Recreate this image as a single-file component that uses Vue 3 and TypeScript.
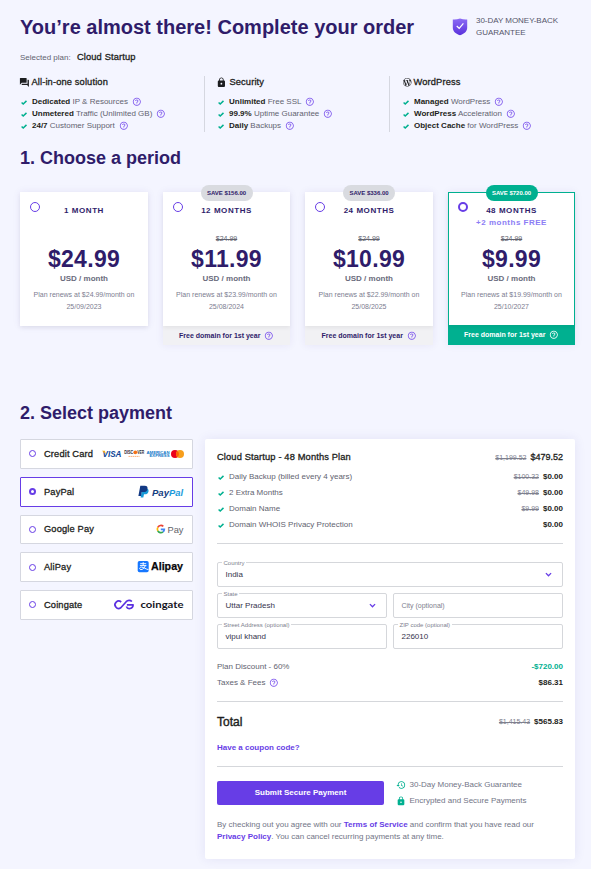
<script setup lang="ts">
import { ref, h, type FunctionalComponent } from 'vue'

interface Feature { strong: string; rest: string }
interface Column { icon: 'forum' | 'lock' | 'wordpress'; title: string; items: Feature[] }
interface Period { id: number; label: string; bonus?: string; save?: string; old?: string; price: string; renew: string; date: string }

const paths: Record<string, string> = {
  help: 'M11 18h2v-2h-2v2zm1-16C6.48 2 2 6.48 2 12s4.48 10 10 10 10-4.48 10-10S17.52 2 12 2zm0 18c-4.41 0-8-3.59-8-8s3.59-8 8-8 8 3.59 8 8-3.59 8-8 8zm0-14c-2.21 0-4 1.79-4 4h2c0-1.1.9-2 2-2s2 .9 2 2c0 2-3 1.75-3 5h2c0-2.25 3-2.5 3-5 0-2.21-1.79-4-4-4z',
  forum: 'M21 6h-2v9H6v2c0 .55.45 1 1 1h11l4 4V7c0-.55-.45-1-1-1zm-4 6V3c0-.55-.45-1-1-1H3c-.55 0-1 .45-1 1v14l4-4h10c.55 0 1-.45 1-1z',
  lock: 'M18 8h-1V6c0-2.76-2.24-5-5-5S7 3.24 7 6v2H6c-1.1 0-2 .9-2 2v10c0 1.1.9 2 2 2h12c1.1 0 2-.9 2-2V10c0-1.1-.9-2-2-2zm-6 9c-1.1 0-2-.9-2-2s.9-2 2-2 2 .9 2 2-.9 2-2 2zm3.1-9H8.9V6c0-1.71 1.39-3.1 3.1-3.1 1.71 0 3.1 1.39 3.1 3.1v2z',
  history: 'M13 3c-4.97 0-9 4.03-9 9H1l3.89 3.89.07.14L9 12H6c0-3.87 3.13-7 7-7s7 3.13 7 7-3.13 7-7 7c-1.93 0-3.68-.79-4.94-2.06l-1.42 1.42C8.27 19.99 10.51 21 13 21c4.97 0 9-4.03 9-9s-4.03-9-9-9zm-1 5v5l4.28 2.54.72-1.21-3.5-2.08V8H12z',
  wordpress: 'M21.469 6.825c.84 1.537 1.318 3.3 1.318 5.175 0 3.979-2.156 7.456-5.363 9.325l3.295-9.527c.615-1.54.82-2.771.82-3.864 0-.405-.026-.78-.07-1.11m-7.981.105c.647-.03 1.232-.105 1.232-.105.582-.075.514-.93-.067-.899 0 0-1.755.135-2.88.135-1.064 0-2.85-.15-2.85-.15-.585-.03-.661.855-.075.885 0 0 .54.061 1.125.09l1.68 4.605-2.37 7.08L5.354 6.9c.649-.03 1.234-.1 1.234-.1.585-.075.516-.93-.065-.896 0 0-1.746.138-2.874.138-.2 0-.438-.008-.69-.015C4.911 3.15 8.235 1.215 12 1.215c2.809 0 5.365 1.072 7.286 2.833-.046-.003-.091-.009-.141-.009-1.06 0-1.812.923-1.812 1.914 0 .89.513 1.643 1.06 2.531.411.72.89 1.643.89 2.977 0 .915-.354 1.994-.821 3.479l-1.075 3.585-3.9-11.61.001.014zM12 22.784c-1.059 0-2.081-.153-3.048-.437l3.237-9.406 3.315 9.087c.024.053.05.101.078.149-1.12.393-2.325.609-3.582.609M1.211 12c0-1.564.336-3.05.935-4.39L7.29 21.709C3.694 19.96 1.212 16.271 1.211 12M12 0C5.385 0 0 5.385 0 12s5.385 12 12 12 12-5.385 12-12S18.615 0 12 0',
}

const Icon: FunctionalComponent<{ name: string }> = (props) =>
  h('svg', { viewBox: '0 0 24 24', 'aria-hidden': 'true' }, [h('path', { d: paths[props.name], fill: 'currentColor' })])
Icon.props = ['name']

const Check: FunctionalComponent = () =>
  h('svg', { viewBox: '0 0 6 5', 'aria-hidden': 'true' }, [
    h('path', { d: 'M.6 2.5 2.2 4 5.5.9', fill: 'none', stroke: '#00b090', 'stroke-width': '1.5' }),
  ])

const columns: Column[] = [
  { icon: 'forum', title: 'All-in-one solution', items: [
    { strong: 'Dedicated', rest: 'IP & Resources' },
    { strong: 'Unmetered', rest: 'Traffic (Unlimited GB)' },
    { strong: '24/7', rest: 'Customer Support' },
  ] },
  { icon: 'lock', title: 'Security', items: [
    { strong: 'Unlimited', rest: 'Free SSL' },
    { strong: '99.9%', rest: 'Uptime Guarantee' },
    { strong: 'Daily', rest: 'Backups' },
  ] },
  { icon: 'wordpress', title: 'WordPress', items: [
    { strong: 'Managed', rest: 'WordPress' },
    { strong: 'WordPress', rest: 'Acceleration' },
    { strong: 'Object Cache', rest: 'for WordPress' },
  ] },
]

const periods: Period[] = [
  { id: 1, label: '1 MONTH', price: '$24.99', renew: '$24.99', date: '25/09/2023' },
  { id: 12, label: '12 MONTHS', save: 'SAVE $156.00', old: '$24.99', price: '$11.99', renew: '$23.99', date: '25/08/2024' },
  { id: 24, label: '24 MONTHS', save: 'SAVE $336.00', old: '$24.99', price: '$10.99', renew: '$22.99', date: '25/08/2025' },
  { id: 48, label: '48 MONTHS', bonus: '+2 months FREE', save: 'SAVE $720.00', old: '$24.99', price: '$9.99', renew: '$19.99', date: '25/10/2027' },
]

const methods = ['Credit Card', 'PayPal', 'Google Pay', 'AliPay', 'Coingate']

const lines = [
  { name: 'Daily Backup (billed every 4 years)', old: '$100.32' },
  { name: '2 Extra Months', old: '$49.98' },
  { name: 'Domain Name', old: '$9.99' },
  { name: 'Domain WHOIS Privacy Protection', old: '' },
]

const period = ref(48)
const method = ref('PayPal')
</script>

<template>
  <main class="page">
    <header class="head">
      <h1>You’re almost there! Complete your order</h1>
      <div class="guarantee">
        <svg class="shield" viewBox="0 0 16 18">
          <defs>
            <linearGradient id="shieldFill" x1="0" y1="0" x2="0" y2="1">
              <stop offset="0" stop-color="#8c6cf5" />
              <stop offset="1" stop-color="#5a31dc" />
            </linearGradient>
          </defs>
          <path d="M8 .5C5.500 1.400 3.200 1.500.8 1.400v8C.8 13.400 4 15.900 8 17.200c4-1.300 7.200-3.800 7.200-7.800v-8C12.800 1.500 10.500 1.400 8 .5z" fill="url(#shieldFill)" />
          <path d="M4.700 8 7.200 10.300 11.400 5.300" fill="none" stroke="#fff" stroke-width="1.200" />
        </svg>
        <p>30-DAY MONEY-BACK<br />GUARANTEE</p>
      </div>
    </header>

    <p class="selected">Selected plan: <b class="medium">Cloud Startup</b></p>

    <section class="columns">
      <div v-for="col in columns" :key="col.title" class="column">
        <h3 class="medium"><Icon :name="col.icon" :class="['head-icon', col.icon]" />{{ col.title }}</h3>
        <ul>
          <li v-for="f in col.items" :key="f.strong">
            <Check class="check" /><span><b>{{ f.strong }}</b> {{ f.rest }}</span><Icon name="help" class="help" />
          </li>
        </ul>
      </div>
    </section>

    <h2 class="period-title">1. Choose a period</h2>

    <section class="periods">
      <article v-for="p in periods" :key="p.id" class="period" :class="{ active: period === p.id }" @click="period = p.id">
        <div class="body">
          <span v-if="p.save" class="save">{{ p.save }}</span>
          <span class="radio big" :class="{ on: period === p.id }"></span>
          <div class="label">{{ p.label }}</div>
          <div class="bonus">{{ p.bonus }}</div>
          <div class="old">{{ p.old }}</div>
          <div class="price">{{ p.price }}</div>
          <div class="unit">USD / month</div>
          <div class="renew">Plan renews at {{ p.renew }}/month on<br />{{ p.date }}</div>
        </div>
        <div v-if="p.save" class="foot">Free domain for 1st year<Icon name="help" class="help" /></div>
      </article>
    </section>

    <h2 class="payment-title">2. Select payment</h2>

    <section class="payment">
      <div class="methods">
        <button v-for="m in methods" :key="m" type="button" class="method" :class="{ active: method === m }" @click="method = m">
          <span class="radio" :class="{ on: method === m }"></span>
          <span class="name medium">{{ m }}</span>

          <svg v-if="m === 'Credit Card'" class="logo" width="82" height="12" viewBox="0 0 82 12">
            <text x="0.500" y="9" font-size="8.500" font-weight="700" font-style="italic" fill="#0e4595" textLength="19" lengthAdjust="spacingAndGlyphs">VISA</text>
            <path d="M0 2.700h2.800l1.100 3.200z" fill="#f2ae14" />
            <text x="22.300" y="6" font-size="4.600" font-weight="700" fill="#2b2b33" textLength="9" lengthAdjust="spacingAndGlyphs">DISC</text>
            <circle cx="33.300" cy="4.300" r="1.900" fill="#f47216" />
            <text x="35.200" y="6" font-size="4.600" font-weight="700" fill="#2b2b33" textLength="7" lengthAdjust="spacingAndGlyphs">VER</text>
            <path d="M26.500 8.400h11" stroke="#f9b27c" stroke-width="1" stroke-dasharray="1.500 .5" />
            <text x="44.500" y="5.500" font-size="4.200" font-weight="700" fill="#0f78c8" textLength="23" lengthAdjust="spacingAndGlyphs">AMERICAN</text>
            <text x="47.500" y="9.300" font-size="4.200" font-weight="700" fill="#0f78c8" textLength="20" lengthAdjust="spacingAndGlyphs">EXPRESS</text>
            <circle cx="73" cy="6" r="4" fill="#eb001b" />
            <circle cx="78" cy="6" r="4" fill="#f79e1b" />
            <path d="M75.500 2.900a4 4 0 0 1 0 6.200 4 4 0 0 1 0-6.200z" fill="#ff5f00" />
          </svg>

          <svg v-else-if="m === 'PayPal'" class="logo" width="46" height="14" viewBox="0 0 46 14">
            <path d="M4.300 3.500h4.400c1.600.4 2.100 1.500 1.800 3-.4 2-1.800 2.800-3.700 2.800H6L5.300 12.600H2.600z" fill="#179bd7" />
            <path d="M2.300.8h4.400C8.900.8 9.800 2 9.500 3.900 9.100 6.100 7.600 7.100 5.500 7.100H3.700l-.7 4H.4z" fill="#123984" />
            <text x="14" y="10.500" font-size="9.500" font-weight="700" font-style="italic" fill="#143d80" textLength="17" lengthAdjust="spacingAndGlyphs">Pay</text>
            <text x="31" y="10.500" font-size="9.500" font-weight="700" font-style="italic" fill="#1a9adb" textLength="14" lengthAdjust="spacingAndGlyphs">Pal</text>
          </svg>

          <svg v-else-if="m === 'Google Pay'" class="logo" width="28" height="13" viewBox="0 0 28 13">
            <path d="M7.300 3.400A3.500 3.500 0 0 0 1.800 4.400" fill="none" stroke="#ea4335" stroke-width="1.700" />
            <path d="M1.800 4.400a3.500 3.500 0 0 0 0 3.400" fill="none" stroke="#fbbc04" stroke-width="1.700" />
            <path d="M1.800 7.800a3.500 3.500 0 0 0 5.200 1.100" fill="none" stroke="#34a853" stroke-width="1.700" />
            <path d="M7 8.900a3.500 3.500 0 0 0 1.300-2.500H4.800" fill="none" stroke="#4285f4" stroke-width="1.700" />
            <text x="11.500" y="9.500" font-size="9.800" font-weight="400" fill="#5f6368" textLength="16" lengthAdjust="spacingAndGlyphs">Pay</text>
          </svg>

          <svg v-else-if="m === 'AliPay'" class="logo" width="47" height="14" viewBox="0 0 47 14">
            <rect x="0.700" y="1" width="11" height="11.300" rx="1.700" fill="#1677ff" />
            <path d="M3.200 3.700h6M6.200 2.200v3.500M2.900 5.600h6.500M8.200 5.700C7.600 8 5.700 9.700 3.900 9.600 1.900 9.400 2.500 7 4.600 7.100 6.700 7.300 8.500 9 11.500 9.700" fill="none" stroke="#fff" stroke-width=".95" />
            <text x="14" y="10" font-size="11" font-weight="700" fill="#08080c" stroke="#08080c" stroke-width=".25" textLength="32" lengthAdjust="spacingAndGlyphs">Alipay</text>
          </svg>

          <svg v-else class="logo" width="71" height="13" viewBox="0 0 71 13">
            <path d="M8.200 4A3.700 3.700 0 1 0 7.800 9.800L13.200 3.700c1.500-1.600 4-1.800 5.700-.2M13.900 6.800h6.200c0 4.200-5.500 5-6.700 1.700" fill="none" stroke="#5a2fe0" stroke-width="1.700" stroke-linejoin="round" />
            <text class="coin" x="27.500" y="9.500" font-size="9.500" font-weight="700" fill="#15151d" textLength="43" lengthAdjust="spacingAndGlyphs">coingate</text>
          </svg>
        </button>
      </div>

      <div class="panel">
        <div class="row plan"><b class="medium">Cloud Startup - 48 Months Plan</b><span><s>$1,199.52</s><b class="medium amount">$479.52</b></span></div>
        <div v-for="l in lines" :key="l.name" class="row line">
          <span class="item"><Check class="check" />{{ l.name }}</span>
          <span><s v-if="l.old">{{ l.old }}</s><b>$0.00</b></span>
        </div>
        <hr class="first" />

        <div class="fields">
          <label class="field wide"><span class="tag">Country</span><span>India</span>
            <svg class="chevron" viewBox="0 0 8 6"><path d="M1 1.300 4 4.300 7 1.300" /></svg>
          </label>
          <label class="field"><span class="tag">State</span><span>Uttar Pradesh</span>
            <svg class="chevron" viewBox="0 0 8 6"><path d="M1 1.300 4 4.300 7 1.300" /></svg>
          </label>
          <label class="field"><span class="placeholder">City (optional)</span></label>
          <label class="field"><span class="tag">Street Address (optional)</span><span>vipul khand</span></label>
          <label class="field"><span class="tag">ZIP code (optional)</span><span>226010</span></label>
        </div>

        <div class="row sum"><span>Plan Discount - 60%</span><b class="green">-$720.00</b></div>
        <div class="row sum"><span class="item">Taxes &amp; Fees<Icon name="help" class="help" /></span><b>$86.31</b></div>
        <hr class="second" />
        <div class="row total"><b class="word">Total</b><span><s>$1,415.43</s><b>$565.83</b></span></div>
        <a class="coupon">Have a coupon code?</a>
        <hr class="third" />

        <div class="submit">
          <button type="button">Submit Secure Payment</button>
          <ul>
            <li><Icon name="history" />30-Day Money-Back Guarantee</li>
            <li><Icon name="lock" />Encrypted and Secure Payments</li>
          </ul>
        </div>
        <p class="terms">By checking out you agree with our <b>Terms of Service</b> and confirm that you have read our <b>Privacy Policy</b>. You can cancel recurring payments at any time.</p>
      </div>
    </section>
  </main>
</template>

<style>
body { background: #f4f5ff; }
</style>

<style scoped>
.page {
  box-sizing: border-box;
  width: 591px;
  height: 869px;
  padding: 0 16px 0 20px;
  overflow: hidden;
  background: #f4f5ff;
  font-family: "Liberation Sans", Arial, sans-serif;
  font-size: 8px;
  line-height: 12px;
  color: #62636f;
}
h1, h2, h3, p, ul { margin: 0; padding: 0; list-style: none; }
b { color: #1d1e20; }
svg { display: block; flex: none; overflow: visible; }
h1, h2 { color: #2f1c6a; font-weight: 700; white-space: nowrap; }
.medium { font-size: 9.300px; font-weight: 400; letter-spacing: .14px; -webkit-text-stroke: .3px currentColor; }
.amount { font-size: 9px; letter-spacing: 0; }

.head { display: flex; justify-content: space-between; height: 47px; }
h1 { font-size: 20px; line-height: 24px; padding-top: 15px; }
.guarantee { display: flex; gap: 8px; width: 123px; padding-top: 14px; white-space: nowrap; }
.guarantee p { padding-top: 1px; color: #55566a; letter-spacing: -.03px; }
.shield { width: 16px; height: 18px; margin-top: 4px; }

.selected { height: 20px; line-height: 20px; }
.selected b { margin-left: 4px; }

.columns { display: grid; grid-template-columns: repeat(3, 185px); height: 56px; margin-top: 9px; }
.column { box-sizing: border-box; margin-left: -1px; padding-left: 12px; border-left: 1px solid #d5d7e0; }
.column:first-child { margin-left: 0; padding-left: 0; border-left: 0; }
.column h3 { display: flex; align-items: center; height: 12px; color: #1d1e20; }
.head-icon { width: 10.800px; height: 10.800px; margin: 1px 1.500px 0 -.9px; }
.head-icon.wordpress { width: 8.500px; height: 8.500px; margin: 0 2.500px 0 .5px; }
.head-icon.lock { margin: 0 2.300px 0 -.7px; }
.column ul { padding-top: 8px; }
.column li { display: flex; align-items: center; height: 12px; white-space: nowrap; }
.check { width: 6px; height: 5px; margin: 1px 5px 0 1px; }
.help { width: 9.600px; height: 9.600px; margin-left: 4px; color: #7a52ec; }

h2 { font-size: 18px; line-height: 24px; }
.period-title { margin-top: 14px; }

.periods { display: grid; grid-template-columns: 128px 127px 128px 127px; gap: 15px; margin-top: 22px; height: 153px; align-items: start; }
.period { box-shadow: 0 0 8px rgba(60, 40, 150, .08); text-align: center; white-space: nowrap; }
.body { position: relative; box-sizing: border-box; height: 134px; padding-top: 13px; background: #fff; box-shadow: 0 2px 4px rgba(0, 0, 0, .06); }
.active .body { height: 133px; border: 1px solid #00b090; border-bottom: 0; padding-top: 12px; }
.save {
  position: absolute;
  top: -7px;
  left: 50%;
  width: 52px;
  height: 16px;
  border-radius: 8px;
  transform: translateX(-50%);
  background: #d9dbe0;
  color: #2f1c6a;
  font-size: 6px;
  font-weight: 700;
  line-height: 16px;
}
.active .save { top: -8px; background: #00b090; color: #fff; }
.radio { box-sizing: border-box; flex: none; width: 7px; height: 7px; border: 1px solid #673de6; border-radius: 50%; background: #fff; }
.radio.on { border-width: 2px; }
.radio.big { position: absolute; top: 10px; left: 10px; width: 10px; height: 10px; }
.radio.big.on { top: 9px; left: 9px; border-width: 2px; }
.label { color: #2f1c6a; font-weight: 700; letter-spacing: .55px; }
.bonus { height: 12px; color: #8c7df5; font-weight: 700; letter-spacing: .5px; }
.old { height: 13px; padding-top: 4px; font-size: 7px; line-height: 12px; box-sizing: border-box; text-decoration: line-through; }
.price { color: #2f1c6a; font-size: 23px; font-weight: 700; line-height: 30px; letter-spacing: .3px; padding-top: 2px; }
.unit { height: 12px; margin-top: -1px; color: #6a6b7c; font-weight: 700; }
.renew { margin-top: 4px; font-size: 7px; color: #7c7d90; }
.foot { display: flex; align-items: center; justify-content: center; height: 19px; background: #f1f1f4; color: #2f1c6a; font-size: 7px; font-weight: 700; }
.active .foot { height: 20px; background: #00b090; color: #fff; }
.active .foot .help { color: #fff; }

.payment-title { margin-top: 56px; }
.payment { display: grid; grid-template-columns: 173px 370px; gap: 12px; margin-top: 14px; align-items: start; }
.methods { display: grid; gap: 8px; }
.method {
  box-sizing: border-box;
  display: flex;
  align-items: center;
  width: 173px;
  height: 29.750px;
  padding: 0 8px;
  border: 1px solid #d5d7e0;
  border-radius: 1px;
  background: #fff;
  color: #1d1e20;
  font: 400 9px/12px "Liberation Sans", Arial, sans-serif;
}
.method.active { border-color: #673de6; }
.name { margin-left: 8px; white-space: nowrap; }
.logo { margin-left: auto; font-family: "Liberation Sans", Arial, sans-serif; }
.coin { font-family: Lato, "Liberation Sans", sans-serif; }

.panel { box-sizing: border-box; height: 420px; padding: 12px; border-radius: 2px; background: #fff; box-shadow: 0 0 12px rgba(60, 40, 150, .09); }
.row { display: flex; align-items: center; justify-content: space-between; height: 16px; white-space: nowrap; }
.item { display: flex; align-items: center; }
.plan { height: 12px; margin-bottom: 6px; }
s { margin-right: 4px; font-size: 7px; color: #7e808e; }
hr { height: 1px; margin: 0; border: 0; background: #d5d7db; }
hr.first { margin-top: 10px; }
.fields { display: grid; grid-template-columns: 1fr 1fr; gap: 6px; margin-top: 18px; margin-bottom: 10px; }
.field {
  position: relative;
  box-sizing: border-box;
  display: flex;
  align-items: center;
  height: 25px;
  padding: 0 10px 0 7.500px;
  border: 1px solid #d5d7db;
  border-radius: 2px;
  color: #36344d;
}
.wide { grid-column: span 2; }
.tag { position: absolute; top: -4px; left: 4px; padding: 0 1.500px; background: #fff; color: #7e808e; font-size: 6px; line-height: 8px; }
.placeholder { color: #7e808e; font-size: 7px; }
.chevron { width: 7px; height: 5.200px; margin-left: auto; fill: none; stroke: #673de6; stroke-width: 1.500; }
.green { color: #00b090; }
hr.second { margin-top: 10px; }
.total { height: 16px; margin-top: 12px; }
.word { font-size: 12px; font-weight: 400; -webkit-text-stroke: .4px currentColor; }
.coupon { display: block; margin-top: 12px; height: 12px; color: #673de6; font-weight: 700; }
hr.third { margin-top: 12px; }
.submit { display: flex; gap: 12px; margin-top: 14px; }
.submit button { width: 167px; height: 24px; padding: 0; border: 0; border-radius: 2px; background: #673de6; color: #fff; font: 700 8px/12px "Liberation Sans", Arial, sans-serif; }
.submit ul { margin-top: -4px; }
.submit li { display: flex; align-items: center; gap: 3.500px; height: 16px; white-space: nowrap; color: #727586; }
.submit svg { width: 10px; height: 10px; color: #00b090; }
.terms { margin-top: 10px; color: #727586; }
.terms b { color: #673de6; }
</style>
